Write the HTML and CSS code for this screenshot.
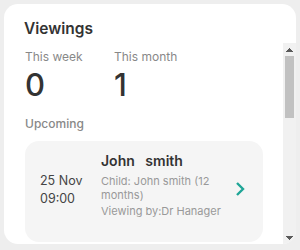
FILE: index.html
```html
<!DOCTYPE html>
<html lang="en">
<head>
    <meta charset="UTF-8">
    <meta name="viewport" content="width=device-width, initial-scale=1.0">
    <title>Viewings</title>
    <link rel="stylesheet" href="styles.css">
</head>
<body>
    <div class="widget">
        <h2 class="widget-title">Viewings</h2>
        <div class="widget-body">
            <div class="widget-content">
                <div class="stats">
                    <div class="stat">
                        <span class="stat-label">This week</span>
                        <span class="stat-value">0</span>
                    </div>
                    <div class="stat">
                        <span class="stat-label">This month</span>
                        <span class="stat-value">1</span>
                    </div>
                </div>
                <h3 class="section-label">Upcoming</h3>
                <ul class="viewing-list">
                    <li class="viewing">
                        <div class="viewing-when">
                            <span>25 Nov</span>
                            <span>09:00</span>
                        </div>
                        <div class="viewing-info">
                            <div class="viewing-name">John &nbsp; smith</div>
                            <div class="viewing-meta">Child: John smith (12 months)</div>
                            <div class="viewing-meta">Viewing by:Dr Hanager</div>
                        </div>
                        <svg class="chevron" width="10" height="16" viewBox="0 0 10 16">
                            <path d="M2 2l6 6-6 6" fill="none" stroke="#1fa597" stroke-width="2.4"/>
                        </svg>
                    </li>
                </ul>
            </div>
            <!-- scrollbar drawn by hand, the headless browser hides the real one -->
            <div class="scrollbar">
                <div class="scroll-btn up"></div>
                <div class="scroll-track">
                    <div class="scroll-thumb"></div>
                </div>
                <div class="scroll-btn down"></div>
            </div>
        </div>
    </div>
</body>
</html>
```

FILE: styles.css
```css
body {
    background-color: #eeeeee;
    color: #333333;
    font-family: Inter, sans-serif;
    margin: 0;
    padding: 4px;
}

.widget {
    background-color: #ffffff;
    border-radius: 14px;
    height: 240px;
    display: flex;
    flex-direction: column;
    overflow: hidden;
}

.widget-title {
    margin: 0;
    padding: 15px 20px 0;
    height: 24px;
    font-size: 15.5px;
    font-weight: 600;
    color: #333333;
}

.widget-body {
    flex: 1;
    display: flex;
    min-height: 0;
}

.widget-content {
    flex: 1;
    overflow: hidden;
    padding: 0 20px 0 21px;
}

.scrollbar {
    width: 13px;
    background-color: #f1f1f1;
    display: flex;
    flex-direction: column;
}

.scroll-btn {
    height: 12px;
    background-repeat: no-repeat;
    background-size: 4px 4px;
}

.scroll-btn.up {
    background-image:
        linear-gradient(to top left, #5a5a5a 50%, transparent 50%),
        linear-gradient(to top right, #5a5a5a 50%, transparent 50%);
    background-position: 3px 5px, 7px 5px;
}

.scroll-btn.down {
    background-image:
        linear-gradient(to bottom left, #5a5a5a 50%, transparent 50%),
        linear-gradient(to bottom right, #5a5a5a 50%, transparent 50%);
    background-position: 3px 4px, 7px 4px;
}

.scroll-track {
    flex: 1;
    padding: 1px 2px;
}

.scroll-thumb {
    height: 62px;
    background-color: #c1c1c1;
}

.stats {
    display: flex;
    padding-top: 6px;
}

.stat {
    width: 89px;
    display: flex;
    flex-direction: column;
}

.stat-label {
    font-size: 12px;
    color: #888888;
    line-height: 16px;
}

.stat-value {
    font-size: 31px;
    font-weight: 500;
    color: #333333;
    line-height: 40px;
}

.section-label {
    margin: 11px 0 9px;
    font-size: 12px;
    font-weight: 500;
    color: #888888;
    line-height: 16px;
}

.viewing-list {
    list-style: none;
    margin: 0;
    padding: 0;
}

.viewing {
    background-color: #f5f5f5;
    border-radius: 14px;
    height: 101px;
    padding: 11px 18px 0 15px;
    box-sizing: border-box;
    display: flex;
    align-items: flex-start;
}

.viewing-when {
    width: 61px;
    align-self: center;
    display: flex;
    flex-direction: column;
    font-size: 12.5px;
    line-height: 18px;
    color: #444444;
    margin-top: -14px;
}

.viewing-info {
    flex: 1;
}

.viewing-name {
    font-size: 14px;
    font-weight: 600;
    line-height: 18px;
    margin-bottom: 4px;
}

.viewing-meta {
    font-size: 11px;
    line-height: 14px;
    color: #999999;
    margin-bottom: 2px;
}

.chevron {
    align-self: center;
    margin-top: -16px;
}
```
